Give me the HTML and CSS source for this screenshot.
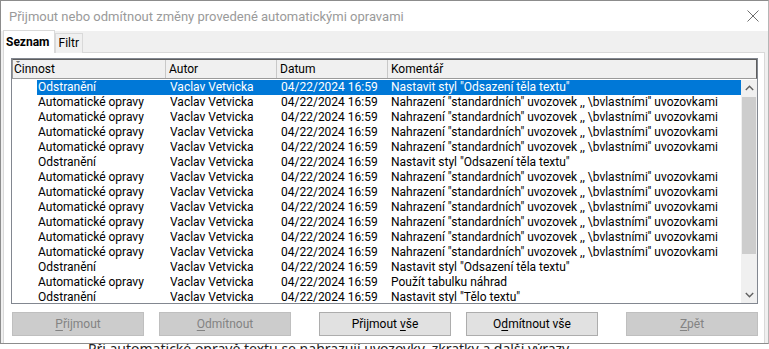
FILE: index.html
```html
<!DOCTYPE html>
<html lang="cs">
<head>
<meta charset="utf-8">
<title>Přijmout nebo odmítnout změny</title>
<link rel="stylesheet" href="styles.css">
</head>
<body>
<div class="dialog">
  <div class="titlebar">
    <span class="title">Přijmout nebo odmítnout změny provedené automatickými opravami</span>
    <svg class="close" width="12" height="12" viewBox="0 0 12 12"><path d="M0.5 0.5L11.5 11.5M11.5 0.5L0.5 11.5" stroke="#6e6e6e" stroke-width="1" fill="none"/></svg>
  </div>
  <div class="body">
    <div class="tabs">
      <div class="tab active">Seznam</div>
      <div class="tab">Filtr</div>
    </div>
    <div class="panel">
      <div class="list">
        <div class="header">
          <div class="hcell c1">Činnost</div>
          <div class="hcell c2">Autor</div>
          <div class="hcell c3">Datum</div>
          <div class="hcell c4">Komentář</div>
        </div>
        <div class="content">
          <div class="rows">
            <div class="row selected"><span class="c1">Odstranění</span><span class="c2">Vaclav Vetvicka</span><span class="c3">04/22/2024 16:59</span><span class="c4">Nastavit styl "Odsazení těla textu"</span></div>
            <div class="row"><span class="c1">Automatické opravy</span><span class="c2">Vaclav Vetvicka</span><span class="c3">04/22/2024 16:59</span><span class="c4">Nahrazení "standardních" uvozovek ,, \bvlastními'' uvozovkami</span></div>
            <div class="row"><span class="c1">Automatické opravy</span><span class="c2">Vaclav Vetvicka</span><span class="c3">04/22/2024 16:59</span><span class="c4">Nahrazení "standardních" uvozovek ,, \bvlastními'' uvozovkami</span></div>
            <div class="row"><span class="c1">Automatické opravy</span><span class="c2">Vaclav Vetvicka</span><span class="c3">04/22/2024 16:59</span><span class="c4">Nahrazení "standardních" uvozovek ,, \bvlastními'' uvozovkami</span></div>
            <div class="row"><span class="c1">Automatické opravy</span><span class="c2">Vaclav Vetvicka</span><span class="c3">04/22/2024 16:59</span><span class="c4">Nahrazení "standardních" uvozovek ,, \bvlastními'' uvozovkami</span></div>
            <div class="row"><span class="c1">Odstranění</span><span class="c2">Vaclav Vetvicka</span><span class="c3">04/22/2024 16:59</span><span class="c4">Nastavit styl "Odsazení těla textu"</span></div>
            <div class="row"><span class="c1">Automatické opravy</span><span class="c2">Vaclav Vetvicka</span><span class="c3">04/22/2024 16:59</span><span class="c4">Nahrazení "standardních" uvozovek ,, \bvlastními'' uvozovkami</span></div>
            <div class="row"><span class="c1">Automatické opravy</span><span class="c2">Vaclav Vetvicka</span><span class="c3">04/22/2024 16:59</span><span class="c4">Nahrazení "standardních" uvozovek ,, \bvlastními'' uvozovkami</span></div>
            <div class="row"><span class="c1">Automatické opravy</span><span class="c2">Vaclav Vetvicka</span><span class="c3">04/22/2024 16:59</span><span class="c4">Nahrazení "standardních" uvozovek ,, \bvlastními'' uvozovkami</span></div>
            <div class="row"><span class="c1">Automatické opravy</span><span class="c2">Vaclav Vetvicka</span><span class="c3">04/22/2024 16:59</span><span class="c4">Nahrazení "standardních" uvozovek ,, \bvlastními'' uvozovkami</span></div>
            <div class="row"><span class="c1">Automatické opravy</span><span class="c2">Vaclav Vetvicka</span><span class="c3">04/22/2024 16:59</span><span class="c4">Nahrazení "standardních" uvozovek ,, \bvlastními'' uvozovkami</span></div>
            <div class="row"><span class="c1">Automatické opravy</span><span class="c2">Vaclav Vetvicka</span><span class="c3">04/22/2024 16:59</span><span class="c4">Nahrazení "standardních" uvozovek ,, \bvlastními'' uvozovkami</span></div>
            <div class="row"><span class="c1">Odstranění</span><span class="c2">Vaclav Vetvicka</span><span class="c3">04/22/2024 16:59</span><span class="c4">Nastavit styl "Odsazení těla textu"</span></div>
            <div class="row"><span class="c1">Automatické opravy</span><span class="c2">Vaclav Vetvicka</span><span class="c3">04/22/2024 16:59</span><span class="c4">Použít tabulku náhrad</span></div>
            <div class="row"><span class="c1">Odstranění</span><span class="c2">Vaclav Vetvicka</span><span class="c3">04/22/2024 16:59</span><span class="c4">Nastavit styl "Tělo textu"</span></div>
          </div>
          <div class="scrollbar">
            <div class="arrow"><svg width="9" height="6" viewBox="0 0 9 6"><path d="M0.8 5L4.5 1.3L8.2 5" stroke="#606060" stroke-width="1.4" fill="none"/></svg></div>
            <div class="track"><div class="thumb"></div></div>
            <div class="arrow"><svg width="9" height="6" viewBox="0 0 9 6"><path d="M0.8 1L4.5 4.7L8.2 1" stroke="#606060" stroke-width="1.4" fill="none"/></svg></div>
          </div>
        </div>
      </div>
      <div class="buttons">
        <div class="btn disabled"><u>P</u>řijmout</div>
        <div class="btn disabled near"><u>O</u>dmítnout</div>
        <div class="btn far">Přijmout <u>v</u>še</div>
        <div class="btn near">O<u>d</u>mítnout vše</div>
        <div class="btn disabled far"><u>Z</u>pět</div>
      </div>
    </div>
  </div>
</div>
<div class="behind"><span>Při automatické opravě textu se nahrazují uvozovky, zkratky a další výrazy.</span></div>
</body>
</html>
```
FILE: styles.css
```css
html, body {
  margin: 0;
  padding: 0;
  background: #ffffff;
}
body {
  width: 769px;
  height: 349px;
  overflow: hidden;
  font-family: Roboto, "Noto Sans", sans-serif;
  font-size: 12px;
  color: #000;
}
.dialog {
  box-sizing: border-box;
  width: 769px;
  height: 344px;
  border: 1px solid #8c8c8c;
  border-right-color: #b5b5b5;
  background: #f0f0f0;
  display: flex;
  flex-direction: column;
}
.titlebar {
  height: 30px;
  flex: none;
  background: #ffffff;
  display: flex;
  align-items: center;
  justify-content: space-between;
  padding: 0 9px 0 8px;
}
.title {
  font-size: 13px;
  color: #9a9a9a;
  white-space: nowrap;
}
.close {
  display: block;
  margin-top: -1px;
}
.body {
  flex: 1;
  display: flex;
  flex-direction: column;
  padding: 0 3px 0 2px;
  min-height: 0;
}
.tabs {
  display: flex;
  align-items: flex-end;
  height: 22px;
  flex: none;
  position: relative;
  z-index: 1;
  margin-bottom: -1px;
}
.tab {
  box-sizing: border-box;
  height: 20px;
  padding: 0 3px 0 3px;
  border: 1px solid #d9d9d9;
  border-bottom: none;
  line-height: 19px;
  background: #f0f0f0;
}
.tab.active {
  height: 23px;
  font-weight: bold;
  background: #ffffff;
  padding: 0 4px 0 2px;
  line-height: 23px;
  margin-right: 0;
}
.panel {
  flex: 1;
  background: #ffffff;
  border: 1px solid #d9d9d9;
  border-bottom: none;
  display: flex;
  flex-direction: column;
  padding: 5px 6px 0 7px;
  min-height: 0;
}
.list {
  box-sizing: border-box;
  height: 246px;
  flex: none;
  border: 1px solid #828790;
  display: flex;
  flex-direction: column;
  overflow: hidden;
}
.header {
  display: flex;
  height: 20px;
  flex: none;
  background: #f0f0f0;
  border-top: 1px solid #5e5e5e;
  border-bottom: 1px solid #9a9a9a;
  border-left: 1px solid #9a9a9a;
  border-right: 1px solid #5e5e5e;
  box-sizing: border-box;
}
.hcell {
  box-sizing: border-box;
  line-height: 19px;
  padding-left: 2px;
  border-right: 1px solid #c8c8c8;
  white-space: nowrap;
}
.hcell.c1 { width: 153px; padding-left: 1px; }
.hcell.c2 { width: 111px; padding-left: 3px; }
.hcell.c3 { width: 111px; padding-left: 3px; }
.hcell.c4 { flex: 1; border-right: none; padding-left: 3px; }
.content {
  flex: 1;
  display: flex;
  min-height: 0;
  padding-top: 1px;
}
.rows {
  flex: 1;
  overflow: hidden;
}
.row {
  display: flex;
  height: 15px;
  line-height: 15px;
  white-space: nowrap;
  margin-left: 25px;
  padding-left: 1px;
}
.row.selected {
  background: #0078d7;
  color: #ffffff;
}
.row span { display: block; overflow: hidden; }
.row .c1 { width: 132px; }
.row .c2 { width: 111px; }
.row .c3 { width: 110px; }
.row .c4 { flex: 1; }
.scrollbar {
  width: 16px;
  flex: none;
  display: flex;
  flex-direction: column;
  background: #f0f0f0;
}
.arrow {
  height: 16px;
  flex: none;
  display: flex;
  align-items: center;
  justify-content: center;
}
.track {
  flex: 1;
  padding-top: 1px;
}
.thumb {
  height: 157px;
  background: #cdcdcd;
  margin: 0 1px;
}
.buttons {
  display: flex;
  margin-top: 8px;
  padding-left: 1px;
}
.btn {
  box-sizing: border-box;
  width: 132px;
  height: 24px;
  line-height: 22px;
  text-align: center;
  background: #e1e1e1;
  border: 1px solid #adadad;
  color: #000;
  white-space: nowrap;
}
.btn u {
  text-decoration: underline;
  text-underline-offset: 2px;
}
.btn.disabled {
  background: #cccccc;
  border-color: #bfbfbf;
  color: #838383;
}
.btn.near { margin-left: 15px; }
.btn.far { margin-left: 28px; }
.behind {
  height: 5px;
  overflow: hidden;
  padding-left: 88px;
  font-family: "Noto Sans", sans-serif;
  font-size: 14px;
  line-height: 10px;
  color: #222;
  white-space: nowrap;
}
```
